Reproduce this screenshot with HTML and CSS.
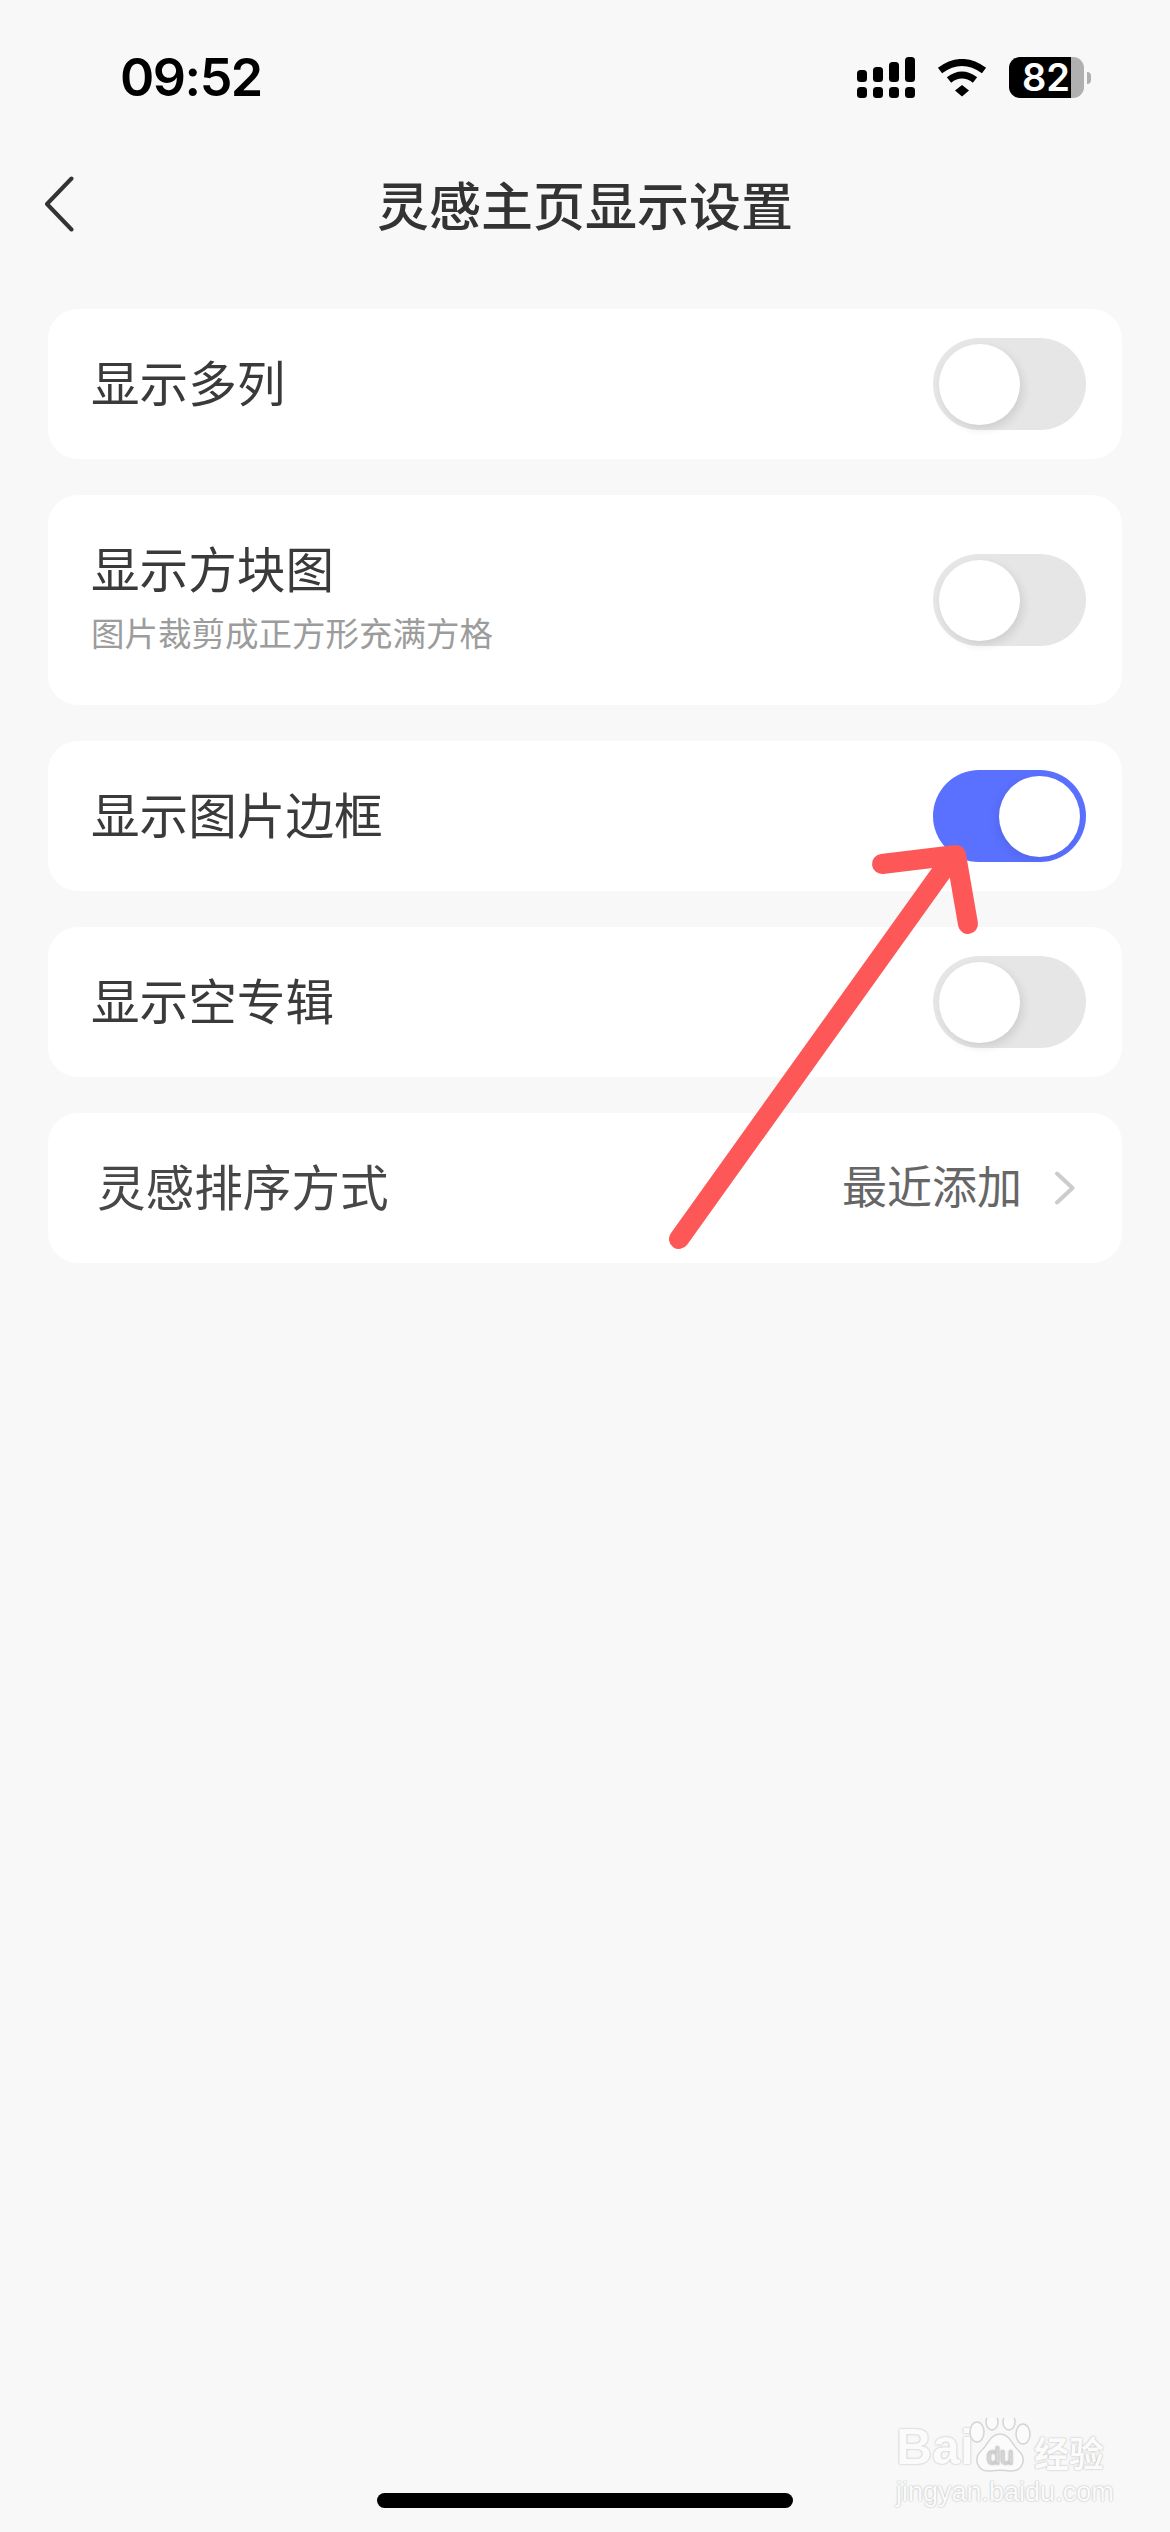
FILE: index.html
```html
<!DOCTYPE html>
<html lang="zh-CN">
<head>
    <meta charset="UTF-8">
    <meta name="viewport" content="width=device-width, initial-scale=1.0">
    <title>灵感主页显示设置</title>
    <link rel="stylesheet" href="styles.css">
</head>
<body>
    <div class="page">
        <div class="status">
            <span class="time">09:52</span>
            <div class="status-icons">
                <svg class="signal" width="58" height="41" viewBox="0 0 58 41" fill="#000">
                    <rect x="0" y="13" width="10" height="12" rx="3.5"/>
                    <rect x="16" y="10" width="10" height="15" rx="3.5"/>
                    <rect x="32" y="5" width="10" height="20" rx="3.5"/>
                    <rect x="48" y="0" width="10" height="25" rx="3.5"/>
                    <rect x="0" y="30" width="10" height="11" rx="3.5"/>
                    <rect x="16" y="30" width="10" height="11" rx="3.5"/>
                    <rect x="32" y="30" width="10" height="11" rx="3.5"/>
                    <rect x="48" y="30" width="10" height="11" rx="3.5"/>
                </svg>
                <svg class="wifi" width="50" height="38" viewBox="0 0 50 38">
                    <path d="M3 11.5Q25 -4.5 47 11.5" fill="none" stroke="#000" stroke-width="7"/>
                    <path d="M12 21Q25 11 38 21" fill="none" stroke="#000" stroke-width="7"/>
                    <path d="M18 31.5L25 26L32 31.5L25 37.5Z" fill="#000"/>
                </svg>
                <div class="battery">
                    <div class="battery-body">
                        <span class="battery-level">82</span>
                        <span class="battery-rest"></span>
                    </div>
                    <span class="battery-nub"></span>
                </div>
            </div>
        </div>

        <div class="nav">
            <svg class="back" width="30" height="56" viewBox="0 0 30 56">
                <path d="M27.5 2.5L3 28L27.5 53.5" fill="none" stroke="#333" stroke-width="4" stroke-linecap="round" stroke-linejoin="round"/>
            </svg>
            <h1 class="nav-title">灵感主页显示设置</h1>
        </div>

        <div class="list">
            <div class="card">
                <span class="label">显示多列</span>
                <span class="toggle"><span class="knob"></span></span>
            </div>
            <div class="card card-tall">
                <div class="label-group">
                    <span class="label">显示方块图</span>
                    <span class="sublabel">图片裁剪成正方形充满方格</span>
                </div>
                <span class="toggle"><span class="knob"></span></span>
            </div>
            <div class="card">
                <span class="label">显示图片边框</span>
                <span class="toggle on"><span class="knob"></span></span>
            </div>
            <div class="card">
                <span class="label">显示空专辑</span>
                <span class="toggle"><span class="knob"></span></span>
            </div>
            <div class="card card-sort">
                <span class="label label-sort">灵感排序方式</span>
                <div class="sort-value">
                    <span class="value">最近添加</span>
                    <svg width="22" height="34" viewBox="0 0 22 34">
                        <path d="M3 2.5L18.5 17L3 31.5" fill="none" stroke="#ccc" stroke-width="4" stroke-linecap="round" stroke-linejoin="round"/>
                    </svg>
                </div>
            </div>
        </div>

        <div class="home-bar"></div>

        <!-- red annotation arrow -->
        <svg class="arrow" width="330" height="430" viewBox="660 830 330 430">
            <g fill="none" stroke="#fd5757" stroke-width="20" stroke-linecap="round" stroke-linejoin="round">
                <path d="M679 1239L953 856"/>
                <path d="M882 864L956 855L968 924"/>
            </g>
        </svg>

        <!-- watermark -->
        <div class="watermark">
            <div class="wm-top">
                <span class="wm-bai">Bai</span>
                <svg class="wm-paw" width="64" height="56" viewBox="0 0 64 56">
                    <g fill="#fbfbfb" stroke="#d4d4d4" stroke-width="1.5">
                        <ellipse cx="9" cy="14" rx="7" ry="10"/>
                        <ellipse cx="24" cy="4" rx="6" ry="8"/>
                        <ellipse cx="41" cy="4" rx="6" ry="8"/>
                        <ellipse cx="55" cy="16" rx="7" ry="10"/>
                        <path d="M32 16C42 16 44 27 50 32C60 41 54 54 42 53C36 52 28 52 22 53C10 54 4 41 14 32C20 27 22 16 32 16Z"/>
                    </g>
                    <text x="32" y="46" text-anchor="middle" class="wm-du">du</text>
                </svg>
                <span class="wm-cn">经验</span>
            </div>
            <div class="wm-url">jingyan.baidu.com</div>
        </div>
    </div>
</body>
</html>
```

FILE: styles.css
```css
* {
    margin: 0;
    padding: 0;
    box-sizing: border-box;
}
body {
    font-family: "Noto Sans CJK SC", "Noto Sans", sans-serif;
    background-color: #f8f8f8;
    color: #333;
}
.page {
    position: relative;
    display: flex;
    flex-direction: column;
    height: 2532px;
    overflow: hidden;
}

/* status bar */
.status {
    display: flex;
    justify-content: space-between;
    align-items: center;
    height: 41px;
    margin-top: 57px;
    padding: 0 79px 0 120px;
}
.time {
    font-family: Inter, "Liberation Sans", sans-serif;
    font-size: 52px;
    font-weight: 600;
    letter-spacing: -1.5px;
    line-height: 60px;
    color: #000;
}
.status-icons {
    display: flex;
    align-items: center;
    gap: 22px;
}
.signal, .wifi {
    display: block;
}
.battery {
    display: flex;
    align-items: center;
    gap: 3px;
}
.battery-body {
    display: flex;
    width: 75px;
    height: 41px;
}
.battery-level {
    width: 62px;
    padding-left: 13px;
    background-color: #000;
    border-radius: 11px 0 0 11px;
    color: #fff;
    font-family: Inter, "Liberation Sans", sans-serif;
    font-size: 38px;
    font-weight: 600;
    line-height: 41px;
}
.battery-rest {
    flex: 1;
    background-color: #b0b0b0;
    border-radius: 0 11px 11px 0;
}
.battery-nub {
    width: 4px;
    height: 12px;
    background-color: #b0b0b0;
    border-radius: 0 6px 6px 0;
}

/* nav */
.nav {
    position: relative;
    display: flex;
    justify-content: center;
    align-items: center;
    height: 112px;
    margin-top: 52px;
}
.back {
    position: absolute;
    left: 44px;
    top: 26px;
}
.nav-title {
    padding-bottom: 4px;
    font-size: 52px;
    font-weight: 500;
    line-height: 60px;
    color: #333;
}

/* settings list */
.list {
    display: flex;
    flex-direction: column;
    gap: 36px;
    margin: 47px 48px 0;
}
.card {
    display: flex;
    justify-content: space-between;
    align-items: center;
    height: 150px;
    padding: 0 36px 0 43px;
    background-color: #fff;
    border-radius: 30px;
}
.card-tall {
    height: 210px;
}
.card-sort {
    padding: 0 46px 0 49px;
}
.label-group {
    display: flex;
    flex-direction: column;
    gap: 7px;
    padding-bottom: 11px;
}
.label {
    padding-bottom: 7px;
    font-size: 48.6px;
    line-height: 60px;
    color: #3a3a3a;
}
.label-sort {
    color: #474747;
}
.sublabel {
    font-size: 33.5px;
    line-height: 42px;
    color: #9c9c9c;
}
.sort-value {
    display: flex;
    align-items: center;
    gap: 32px;
}
.value {
    padding-bottom: 7px;
    font-size: 45px;
    line-height: 60px;
    color: #666;
}
.toggle {
    display: flex;
    align-items: center;
    width: 153px;
    height: 92px;
    padding: 0 6px;
    background-color: #e6e6e6;
    border-radius: 46px;
}
.toggle.on {
    justify-content: flex-end;
    background-color: #5a70ff;
}
.knob {
    width: 81px;
    height: 81px;
    background-color: #fff;
    border-radius: 50%;
    box-shadow: 3px 4px 10px rgba(0, 0, 0, 0.1);
}
.toggle.on .knob {
    box-shadow: -2px 3px 10px rgba(0, 0, 0, 0.08);
}

.home-bar {
    width: 416px;
    height: 15px;
    margin: auto auto 24px;
    background-color: #000;
    border-radius: 8px;
}

/* overlays */
.arrow {
    position: absolute;
    left: 660px;
    top: 830px;
}
.watermark {
    position: absolute;
    left: 896px;
    top: 2420px;
    width: 214px;
    color: #fbfbfb;
    text-shadow: 0 0 2px #a8a8a8;
}
.wm-top {
    display: flex;
    align-items: flex-end;
    height: 54px;
}
.wm-bai {
    width: 72px;
    font-family: "Liberation Sans", sans-serif;
    font-size: 50px;
    font-weight: 700;
    line-height: 54px;
    height: 54px;
}
.wm-paw {
    flex: none;
}
.wm-cn {
    margin-left: 2px;
    font-size: 35px;
    font-weight: 700;
    line-height: 44px;
}
.wm-du {
    font-family: "Liberation Sans", sans-serif;
    font-size: 24px;
    fill: #fbfbfb;
    stroke: #cfcfcf;
    stroke-width: 0.8;
}
.wm-url {
    margin-top: 2px;
    font-family: "Liberation Sans", sans-serif;
    font-size: 27px;
    line-height: 32px;
    white-space: nowrap;
}
```
